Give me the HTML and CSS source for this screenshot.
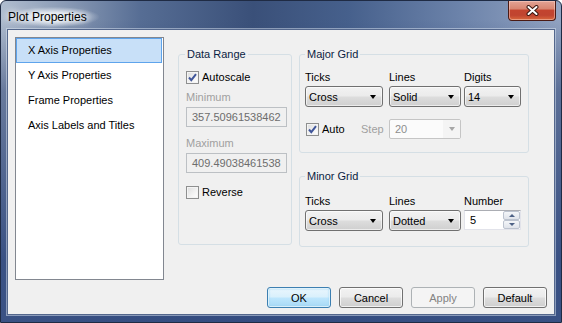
FILE: index.html
```html
<!DOCTYPE html>
<html lang="en">
<head>
    <title>Plot Properties</title>
    <link rel="stylesheet" href="styles.css">
</head>
<body>
    <div class="window">
        <div class="titlebar">
            <span class="title">Plot Properties</span>
            <div class="close-btn">
                <svg width="13" height="11" viewBox="0 0 13 11">
                    <path d="M2.5 2 L10.5 9 M10.5 2 L2.5 9" stroke="#3b1710" stroke-width="4" stroke-linecap="round"/>
                    <path d="M2.5 2 L10.5 9 M10.5 2 L2.5 9" stroke="#ffffff" stroke-width="2" stroke-linecap="round"/>
                </svg>
            </div>
        </div>

        <div class="client">
            <div class="main-row">
                <ul class="page-list">
                    <li class="page-item selected">X Axis Properties</li>
                    <li class="page-item">Y Axis Properties</li>
                    <li class="page-item">Frame Properties</li>
                    <li class="page-item">Axis Labels and Titles</li>
                </ul>

                <div class="pages">
                    <fieldset class="group range-group">
                        <legend>Data Range</legend>
                        <div class="check-row autoscale-row">
                            <span class="checkbox">
                                <svg width="13" height="13" viewBox="0 0 13 13">
                                    <path d="M3 6.5 L5.3 9.2 L10 3.2" fill="none" stroke="#40569a" stroke-width="2"/>
                                </svg>
                            </span>
                            Autoscale
                        </div>
                        <div class="field-label disabled min-label">Minimum</div>
                        <div class="text-field">357.50961538462</div>
                        <div class="field-label disabled max-label">Maximum</div>
                        <div class="text-field">409.49038461538</div>
                        <div class="check-row reverse-row">
                            <span class="checkbox"></span>
                            Reverse
                        </div>
                    </fieldset>

                    <div class="grid-col">
                        <fieldset class="group major-group">
                            <legend>Major Grid</legend>
                            <div class="combo-row">
                                <div class="cell ticks-cell">
                                    <div class="field-label">Ticks</div>
                                    <div class="combo"><span class="combo-text">Cross</span><span class="arrow"></span></div>
                                </div>
                                <div class="cell lines-cell">
                                    <div class="field-label">Lines</div>
                                    <div class="combo"><span class="combo-text">Solid</span><span class="arrow"></span></div>
                                </div>
                                <div class="cell last-cell">
                                    <div class="field-label">Digits</div>
                                    <div class="combo"><span class="combo-text">14</span><span class="arrow"></span></div>
                                </div>
                            </div>
                            <div class="step-row">
                                <div class="check-row auto-cell">
                                    <span class="checkbox">
                                        <svg width="13" height="13" viewBox="0 0 13 13">
                                            <path d="M3 6.5 L5.3 9.2 L10 3.2" fill="none" stroke="#40569a" stroke-width="2"/>
                                        </svg>
                                    </span>
                                    Auto
                                </div>
                                <div class="step-label disabled">Step</div>
                                <div class="step-combo">
                                    <span class="step-text">20</span>
                                    <span class="step-drop"><span class="arrow grey"></span></span>
                                </div>
                            </div>
                        </fieldset>

                        <fieldset class="group minor-group">
                            <legend>Minor Grid</legend>
                            <div class="combo-row">
                                <div class="cell ticks-cell">
                                    <div class="field-label">Ticks</div>
                                    <div class="combo"><span class="combo-text">Cross</span><span class="arrow"></span></div>
                                </div>
                                <div class="cell lines-cell">
                                    <div class="field-label">Lines</div>
                                    <div class="combo"><span class="combo-text">Dotted</span><span class="arrow"></span></div>
                                </div>
                                <div class="cell last-cell">
                                    <div class="field-label">Number</div>
                                    <div class="spin">
                                        <span class="spin-text">5</span>
                                        <span class="spin-buttons">
                                            <span class="spin-btn"><span class="spin-up"></span></span>
                                            <span class="spin-btn"><span class="spin-down"></span></span>
                                        </span>
                                    </div>
                                </div>
                            </div>
                        </fieldset>
                    </div>
                </div>
            </div>

            <div class="button-row">
                <button class="btn btn-default">OK</button>
                <button class="btn">Cancel</button>
                <button class="btn btn-disabled">Apply</button>
                <button class="btn">Default</button>
            </div>
        </div>
    </div>
</body>
</html>
```

FILE: styles.css
```css
* {
    margin: 0;
    padding: 0;
}

body {
    font-family: "Liberation Sans", Arial, sans-serif;
    font-size: 11px;
    line-height: 14px;
    color: #000;
}

/* window frame */

.window {
    width: 562px;
    height: 323px;
    box-sizing: border-box;
    display: flex;
    flex-direction: column;
    border: 1px solid #1f2b44;
    border-radius: 6px 6px 0 0;
    background:
        linear-gradient(to bottom, rgba(46, 68, 116, 0) 18px, rgba(46, 68, 116, 0.55) 90px, rgba(52, 76, 128, 0.95) 260px),
        linear-gradient(to right, #b0bdcf 0%, #8899b4 12%, #566d94 25%, #3a5079 45%, #46608c 62%, #6c83aa 82%, #93a4c2 100%);
}

.titlebar {
    height: 28px;
    display: flex;
    justify-content: space-between;
    align-items: flex-start;
    padding-left: 7px;
}

.title {
    margin-top: 6px;
    font-size: 12px;
    line-height: 16px;
    color: #000;
    text-shadow: 0 0 6px #fff, 0 0 10px #fff;
    background: radial-gradient(ellipse at center, rgba(236, 241, 247, 0.85) 30%, rgba(236, 241, 247, 0) 72%);
    padding: 2px 12px 2px 1px;
    margin-left: -1px;
}

.close-btn {
    width: 46px;
    height: 19px;
    margin-right: 5px;
    border: 1px solid #4a1a14;
    border-top: 0;
    border-radius: 0 0 4px 4px;
    background: linear-gradient(to bottom, #e3a395 0%, #d88672 40%, #c3442f 50%, #c04430 75%, #d9683c 100%);
    box-shadow: inset 0 0 0 1px rgba(255, 220, 210, 0.45);
    display: flex;
    align-items: center;
    justify-content: center;
}

.client {
    flex: 1;
    margin: 0 6px 7px 6px;
    background: #f0f0f0;
    border: 1px solid #54678c;
    box-shadow: 0 0 0 1px rgba(220, 230, 242, 0.5);
    display: flex;
    flex-direction: column;
    padding: 7px 7px 0 7px;
}

.main-row {
    display: flex;
    height: 243px;
}

/* left page list */

.page-list {
    list-style: none;
    width: 149px;
    height: 243px;
    box-sizing: border-box;
    border: 1px solid #828790;
    background: #fff;
}

.page-item {
    height: 25px;
    box-sizing: border-box;
    border: 1px solid transparent;
    margin-right: 1px;
    padding-left: 11px;
    line-height: 23px;
}

.page-item.selected {
    background: #c8e0f8;
    border-color: #5ea4ec;
}

.pages {
    display: flex;
    margin-left: 14px;
    margin-top: 10px;
}

/* group boxes */

.group {
    border: 1px solid #d5dfe5;
    border-radius: 3px;
    box-sizing: border-box;
    min-width: 0;
}

.group legend {
    line-height: 14px;
    padding: 0 2px;
    color: #0b1d43;
}

.range-group {
    width: 114px;
    height: 198px;
    padding: 0 4px 0 7px;
}

.range-group legend {
    margin-left: -1px;
}

.grid-col {
    margin-left: 7px;
    display: flex;
    flex-direction: column;
}

.major-group {
    width: 230px;
    height: 106px;
    padding: 0 5px;
}

.minor-group {
    width: 230px;
    height: 78px;
    padding: 0 5px;
    margin-top: 16px;
}

.major-group .combo-row {
    margin-top: 9px;
}

.minor-group .combo-row {
    margin-top: 11px;
}

/* checkboxes and labels */

.check-row {
    display: flex;
    align-items: center;
    height: 14px;
}

.checkbox {
    width: 13px;
    height: 13px;
    box-sizing: border-box;
    border: 1px solid #8e8f8f;
    background: linear-gradient(135deg, #dcdcdc 0%, #f4f4f4 60%, #ffffff 100%);
    box-shadow: inset 0 0 0 1px #f4f4f4;
    margin-right: 3px;
    position: relative;
}

.checkbox svg {
    position: absolute;
    left: -1px;
    top: -1px;
}

.autoscale-row {
    margin-top: 9px;
}

.field-label {
    height: 14px;
}

.disabled {
    color: #a0a0a0;
}

.min-label {
    margin-top: 6px;
}

.max-label {
    margin-top: 9px;
}

.text-field {
    width: 101px;
    height: 20px;
    box-sizing: border-box;
    margin-top: 3px;
    border: 1px solid #bcc0c4;
    background: #f0f0f0;
    color: #6d6d6d;
    padding-left: 5px;
    line-height: 18px;
    white-space: nowrap;
    overflow: hidden;
}

.reverse-row {
    margin-top: 12px;
}

/* combos */

.combo-row {
    display: flex;
}

.ticks-cell {
    width: 78px;
    margin-right: 6px;
}

.lines-cell {
    width: 72px;
    margin-right: 3px;
}

.last-cell {
    width: 57px;
}

.combo {
    margin-top: 2px;
    height: 21px;
    box-sizing: border-box;
    border: 1px solid #707070;
    border-radius: 3px;
    background: linear-gradient(to bottom, #f2f2f2 0%, #ebebeb 48%, #dddddd 52%, #cfcfcf 100%);
    box-shadow: inset 0 0 0 1px rgba(255, 255, 255, 0.6);
    display: flex;
    align-items: center;
    padding: 0 6px 0 3px;
}

.combo-text {
    flex: 1;
}

.arrow {
    width: 0;
    height: 0;
    border-left: 3.5px solid transparent;
    border-right: 3.5px solid transparent;
    border-top: 4px solid #000;
}

.arrow.grey {
    border-top-color: #a6a6a6;
}

.step-row {
    display: flex;
    align-items: center;
    margin-top: 12px;
    height: 20px;
}

.auto-cell {
    width: 55px;
    padding-left: 1px;
}

.step-label {
    width: 28px;
}

.step-combo {
    width: 72px;
    height: 20px;
    box-sizing: border-box;
    border: 1px solid #c5c5c5;
    border-radius: 2px;
    background: #fbfbfb;
    display: flex;
    color: #8d8d8d;
}

.step-text {
    flex: 1;
    padding-left: 5px;
    line-height: 18px;
}

.step-drop {
    width: 17px;
    background: #f4f4f4;
    display: flex;
    align-items: center;
    justify-content: center;
}

/* spin box */

.spin {
    margin-top: 2px;
    height: 20px;
    box-sizing: border-box;
    border: 1px solid #e2e3ea;
    border-top-color: #abadb3;
    background: #fff;
    display: flex;
}

.spin-text {
    flex: 1;
    padding-left: 5px;
    line-height: 18px;
}

.spin-buttons {
    width: 17px;
    display: flex;
    flex-direction: column;
}

.spin-btn {
    flex: 1;
    border: 1px solid #bcc3cf;
    border-radius: 2px;
    background: linear-gradient(to bottom, #f4f6f9, #dfe3ea);
    display: flex;
    align-items: center;
    justify-content: center;
}

.spin-up,
.spin-down {
    width: 0;
    height: 0;
    border-left: 3px solid transparent;
    border-right: 3px solid transparent;
}

.spin-up {
    border-bottom: 3px solid #4d6185;
}

.spin-down {
    border-top: 3px solid #4d6185;
}

/* dialog buttons */

.button-row {
    display: flex;
    justify-content: flex-end;
    gap: 8px;
    margin-top: 7px;
}

.btn {
    width: 64px;
    height: 21px;
    font-family: "Liberation Sans", Arial, sans-serif;
    font-size: 11px;
    color: #000;
    border: 1px solid #707070;
    border-radius: 3px;
    background: linear-gradient(to bottom, #f2f2f2 0%, #ebebeb 48%, #dddddd 52%, #cfcfcf 100%);
    box-shadow: inset 0 0 0 1px rgba(255, 255, 255, 0.7);
}

.btn-default {
    border-color: #3c7fb1;
    background: linear-gradient(to bottom, #eaf6fd 0%, #d9f0fc 48%, #bee6fd 52%, #a7d9f5 100%);
    box-shadow: inset 0 0 0 1px rgba(255, 255, 255, 0.6), inset 0 0 2px 1px #9ad4f2;
}

.btn-disabled {
    border-color: #adb2b5;
    background: #f4f4f4;
    color: #838383;
    box-shadow: none;
}
```
